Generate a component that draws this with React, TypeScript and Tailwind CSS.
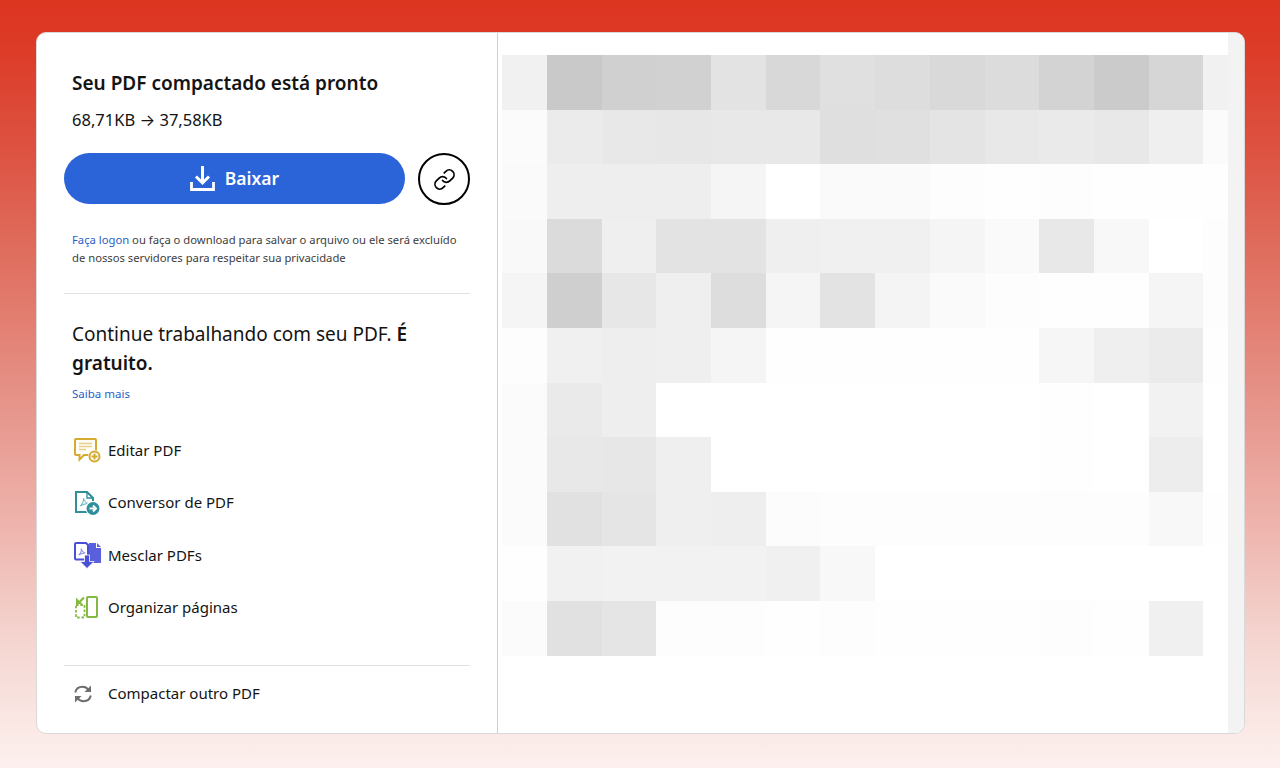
import { Link as LinkIcon } from "lucide-react"

const previewRows = [
  ["#f1f1f1", "#c9c9c9", "#d0d0d0", "#d1d1d1", "#e3e3e3", "#d8d8d8", "#e0e0e0", "#dddddd", "#d9d9d9", "#dcdcdc", "#d3d3d3", "#cbcbcb", "#d6d6d6", "#f1f1f1"],
  ["#fbfbfb", "#ebebeb", "#e8e8e8", "#e7e7e7", "#e8e8e8", "#e8e8e8", "#dfdfdf", "#e0e0e0", "#e4e4e4", "#e8e8e8", "#eaeaea", "#e8e8e8", "#efefef", "#fbfbfb"],
  ["#fafafa", "#eeeeee", "#eeeeee", "#eeeeee", "#f5f5f5", "#ffffff", "#fafafa", "#fafafa", "#fdfdfd", "#fefefe", "#fdfdfd", "#fefefe", "#fefefe", "#fefefe"],
  ["#f9f9f9", "#dbdbdb", "#efefef", "#e3e3e3", "#e3e3e3", "#efefef", "#f0f0f0", "#f0f0f0", "#f5f5f5", "#fafafa", "#e8e8e8", "#f8f8f8", "#ffffff", "#fdfdfd"],
  ["#f5f5f5", "#cfcfcf", "#e7e7e7", "#efefef", "#dddddd", "#f5f5f5", "#e3e3e3", "#f4f4f4", "#fafafa", "#fdfdfd", "#fefefe", "#fefefe", "#f5f5f5", "#fdfdfd"],
  ["#fdfdfd", "#f0f0f0", "#eeeeee", "#efefef", "#f5f5f5", "#fefefe", "#fefefe", "#fefefe", "#fefefe", "#fefefe", "#f6f6f6", "#efefef", "#ebebeb", "#fefefe"],
  ["#fbfbfb", "#eaeaea", "#eeeeee", "#ffffff", "#ffffff", "#ffffff", "#ffffff", "#ffffff", "#ffffff", "#ffffff", "#fefefe", "#ffffff", "#f2f2f2", "#ffffff"],
  ["#fbfbfb", "#e8e8e8", "#e7e7e7", "#efefef", "#ffffff", "#ffffff", "#ffffff", "#ffffff", "#ffffff", "#ffffff", "#fefefe", "#ffffff", "#ededed", "#ffffff"],
  ["#fbfbfb", "#e1e1e1", "#e5e5e5", "#efefef", "#eeeeee", "#fcfcfc", "#fdfdfd", "#fdfdfd", "#fdfdfd", "#fdfdfd", "#fdfdfd", "#fdfdfd", "#f8f8f8", "#fefefe"],
  ["#fefefe", "#f1f1f1", "#f2f2f2", "#f2f2f2", "#f2f2f2", "#f0f0f0", "#f8f8f8", "#ffffff", "#ffffff", "#ffffff", "#ffffff", "#ffffff", "#ffffff", "#ffffff"],
  ["#fbfbfb", "#e1e1e1", "#e5e5e5", "#fdfdfd", "#fdfdfd", "#fefefe", "#fdfdfd", "#fefefe", "#fefefe", "#fefefe", "#fdfdfd", "#fefefe", "#f0f0f0", "#ffffff"],
]

function EditIcon() {
  return (
    <svg width="27" height="25" viewBox="0 0 27 25" fill="none">
      <path d="M2 1h19a1 1 0 0 1 1 1v14a1 1 0 0 1-1 1H10l-4.500 4.500V17H2a1 1 0 0 1-1-1V2a1 1 0 0 1 1-1z" stroke="#d3ab30" strokeWidth="2" fill="#fffdf5" />
      <path d="M5 5.500h13M5 8.500h13M5 11.500h7" stroke="#e6cf8c" strokeWidth="1.300" />
      <circle cx="20.500" cy="18.500" r="6.500" fill="#fff" />
      <circle cx="20.500" cy="18.500" r="5" fill="#fff" stroke="#d3ab30" strokeWidth="2" />
      <path d="M20.500 15.500v6M17.500 18.500h6" stroke="#d3ab30" strokeWidth="2" />
    </svg>
  )
}

function ConvertIcon() {
  return (
    <svg width="26" height="24" viewBox="0 0 26 24" fill="none">
      <path d="M2 1h11l6 6v14H2z" stroke="#2f8f9b" strokeWidth="2" fill="#fff" />
      <path d="M13 1v6h6" stroke="#2f8f9b" strokeWidth="1.300" />
      <path d="M6 15c2-1 4-5 3.600-8 .6 3 2 5 5 5.400-3 .2-6 1.200-8.600 2.600z" stroke="#7fbcc4" strokeWidth="1.100" />
      <circle cx="19" cy="17.500" r="7.500" fill="#fff" />
      <circle cx="19" cy="17.500" r="6.500" fill="#2f8f9b" />
      <path d="M15.500 17.500h5M19 14.500l3 3-3 3" stroke="#fff" strokeWidth="1.900" />
    </svg>
  )
}

function MergeIcon() {
  return (
    <svg width="28" height="27" viewBox="0 0 28 27" fill="none">
      <path d="M2 1h10l2 2v14.500H2a1 1 0 0 1-1-1V2a1 1 0 0 1 1-1z" stroke="#4a4fd8" strokeWidth="2" fill="#fff" />
      <path d="M4.500 13c2-1 3-4 2.800-6.500.5 2.500 1.600 4 4 4.500-2.500 0-4.800.8-6.800 2z" stroke="#8e91e6" strokeWidth="1.100" />
      <path d="M15 1h7v5h5v15H15z" fill="#5a5fdc" />
      <path d="M23 1l4 4h-4z" fill="#5a5fdc" />
      <path d="M10.500 13h5v6.500H20L13 26.500 6 19.500h4.500z" fill="#4a4fd8" stroke="#fff" strokeWidth=".8" />
    </svg>
  )
}

function OrganizeIcon() {
  return (
    <svg width="26" height="24" viewBox="0 0 26 24" fill="none">
      <rect x="13" y="1" width="10" height="20" rx="1" stroke="#84ba42" strokeWidth="2" fill="#fff" />
      <path d="M2 9h8.500v12.500H2z" stroke="#84ba42" strokeWidth="1.800" strokeDasharray="2.600 1.700" />
      <path d="M10 1.500L4.500 7" stroke="#84ba42" strokeWidth="2.200" />
      <path d="M2 1.500v6.500h6.500z" fill="#84ba42" />
    </svg>
  )
}

function RefreshIcon() {
  return (
    <svg width="20" height="20" viewBox="0 0 20 20" fill="none" stroke="#6e6e6e" strokeWidth="2">
      <path d="M2.200 8.500C3 5 6 2.800 9.500 2.800c2.400 0 4.600 1.100 6 3" />
      <path d="M17.800 11.500c-.8 3.500-3.800 5.700-7.300 5.700-2.400 0-4.600-1.100-6-3" />
      <path d="M18 1.500v6.500h-6.500z" fill="#6e6e6e" stroke="none" />
      <path d="M2 18.500v-6.500h6.500z" fill="#6e6e6e" stroke="none" />
    </svg>
  )
}

function DownloadIcon() {
  return (
    <svg width="25" height="25" viewBox="0 0 25 25" fill="none" stroke="#fff" strokeWidth="3">
      <path d="M12.500 0v17M6 10.500l6.500 6.500 6.500-6.500" />
      <path d="M1.500 16v7.500h22V16" strokeWidth="2.800" />
    </svg>
  )
}

const tools = [
  { label: "Editar PDF", icon: <EditIcon /> },
  { label: "Conversor de PDF", icon: <ConvertIcon /> },
  { label: "Mesclar PDFs", icon: <MergeIcon /> },
  { label: "Organizar páginas", icon: <OrganizeIcon /> },
]

export default function App() {
  return (
    <div
      className="h-[768px] w-[1280px] overflow-hidden bg-[linear-gradient(to_bottom,#dc3520_0px,#dc3a26_40px,#dd5241_150px,#e07263_270px,#e58f84_384px,#edb0a9_510px,#f5d5d0_640px,#fbebe8_740px,#fcf0ee_768px)] pt-8 pl-9"
      style={{ fontFamily: '"Noto Sans", sans-serif' }}
    >
      <div className="flex h-[702px] w-[1209px] overflow-hidden rounded-[10px] border border-[#d9d9d9] bg-white">
        {/* Left column */}
        <aside className="flex w-[461px] shrink-0 flex-col border-r border-[#cfcfcf] px-[27px] text-[#141414]">
          <div className="px-2 pt-[36px]">
            <h1 className="text-[19px] leading-[28px] font-semibold">Seu PDF compactado está pronto</h1>
            <p className="mt-[11px] text-[16.500px] leading-[24px]">
              68,71KB <span style={{ fontFamily: "Inter, sans-serif" }}>→</span> 37,58KB
            </p>
          </div>

          <div className="mt-[21px] flex items-start gap-[13px]">
            <button className="flex h-[51px] w-[341px] items-center justify-center gap-[10px] rounded-full bg-[#2b64d8] text-[17.500px] font-semibold text-white">
              <DownloadIcon />
              Baixar
            </button>
            <button className="flex h-[52px] w-[52px] items-center justify-center rounded-full border-2 border-black">
              <LinkIcon size={23} strokeWidth={1.8} className="text-black" />
            </button>
          </div>

          <p className="mt-[26px] px-2 text-[11.250px] leading-[17.500px] text-[#3d3d3d]">
            <span className="text-[#2b5fc7]">Faça logon</span> ou faça o download para salvar o arquivo ou ele será excluído de nossos servidores para respeitar sua privacidade
          </p>

          <div className="mt-[27px] border-t border-[#e3e3e3] px-2 pt-[26px]">
            <p className="text-[19px] leading-[29px]">
              Continue trabalhando com seu PDF. <b className="font-semibold">É gratuito.</b>
            </p>
            <p className="mt-[7px] text-[11.500px] leading-[18px] text-[#2b5fc7]">Saiba mais</p>
          </div>

          <ul className="mt-[33px] flex flex-col gap-[24.500px] px-2">
            {tools.map((tool) => (
              <li key={tool.label} className="flex h-[28px] items-center text-[15px]">
                <span className="flex w-[36px] shrink-0 items-center pl-[2px]">{tool.icon}</span>
                {tool.label}
              </li>
            ))}
          </ul>

          <div className="mt-auto flex h-[68px] items-center border-t border-[#e3e3e3] px-2 pb-[12px] text-[15px]">
            <span className="flex w-[36px] shrink-0 items-center pl-[1px]">
              <RefreshIcon />
            </span>
            Compactar outro PDF
          </div>
        </aside>

        {/* Blurred preview */}
        <main className="flex-1 overflow-hidden pt-[22px] pl-[4px]">
          <div className="grid grid-cols-[45px_repeat(12,54.700px)_25px] auto-rows-[54.600px]">
            {previewRows.flat().map((color, i) => (
              <div key={i} style={{ backgroundColor: color }} />
            ))}
          </div>
        </main>

        {/* Scrollbar track */}
        <div className="w-[16px] shrink-0 bg-[#f3f3f3]" />
      </div>
    </div>
  )
}
